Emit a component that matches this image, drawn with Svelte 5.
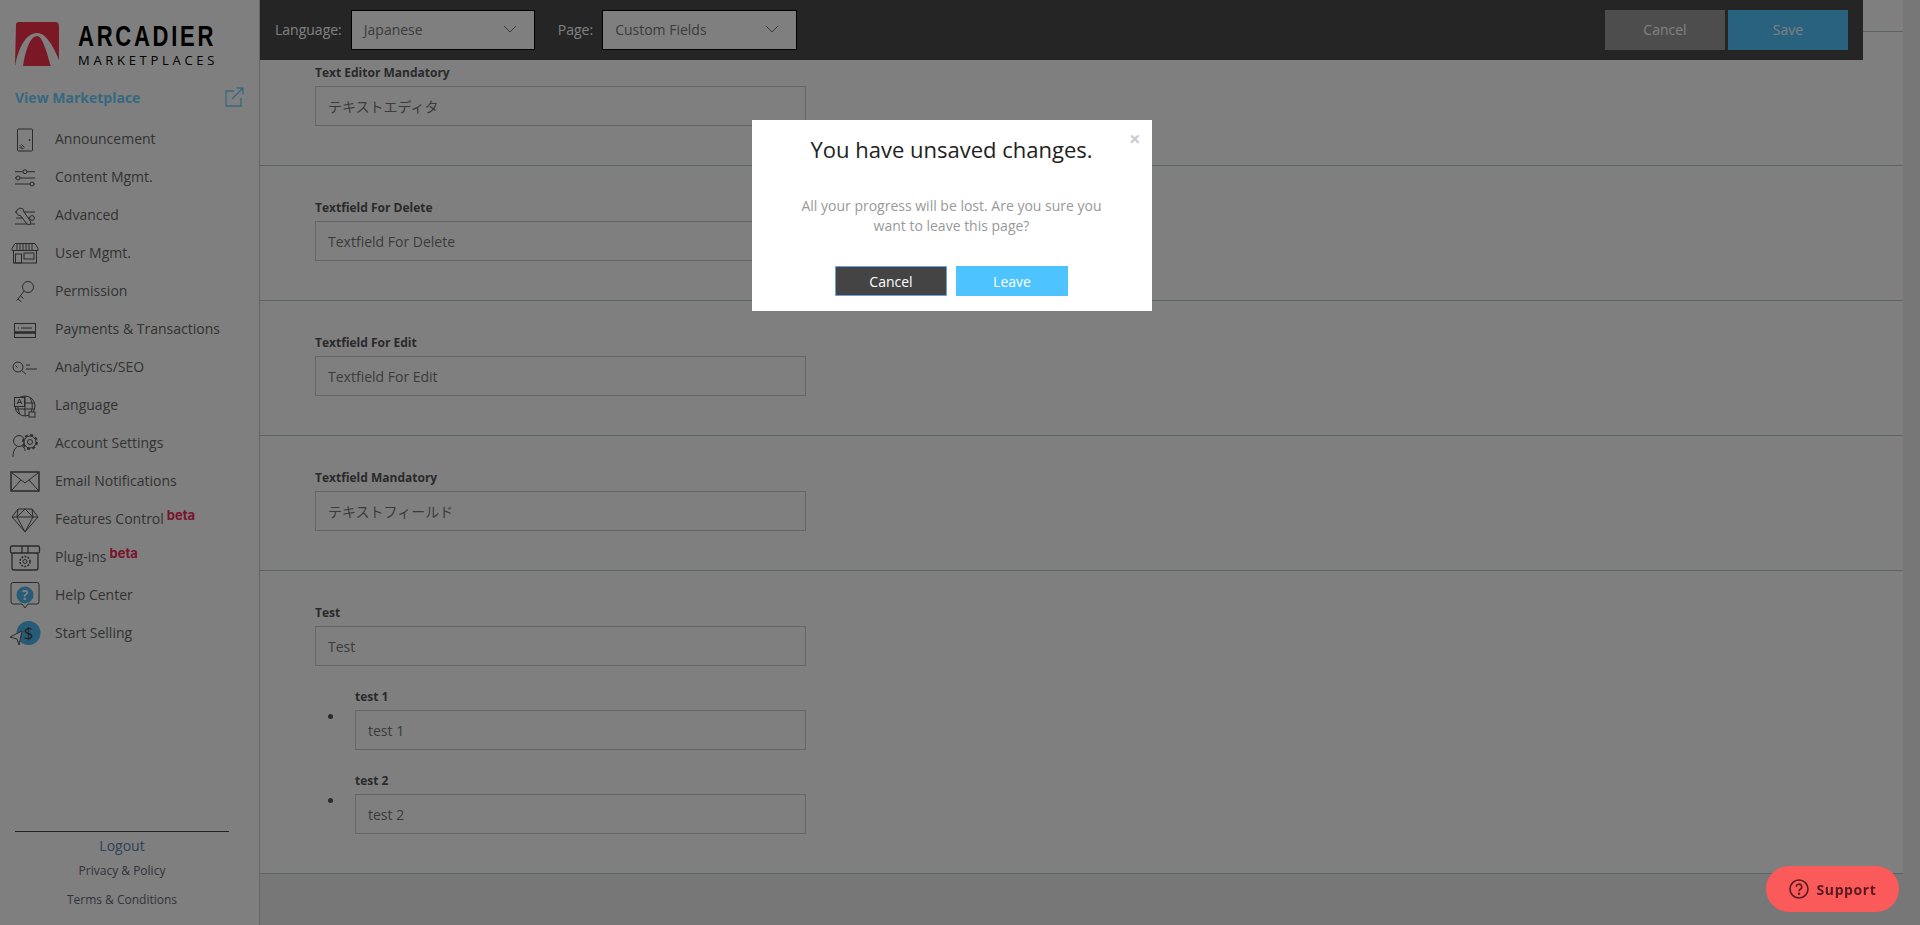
<script lang="ts">
    const icons: Record<string, string> = {
        announcement: `<rect x="8.500" y="7" width="15" height="22" rx="1"/><circle cx="20.500" cy="18" r=".6" fill="#555"/><path d="M10.500 23l4 4M10.500 25l2.500 2.500M12.500 22.500l3 3"/>`,
        content: `<path d="M6 11.700h20M6 18h20M6 24h20"/><circle cx="16" cy="11.700" r="2" fill="#fff"/><circle cx="9" cy="18" r="2" fill="#fff"/><circle cx="23" cy="24" r="2" fill="#fff"/>`,
        advanced: `<path d="M6 14h20M7 20h16M6 26h20"/><path d="M8 12l3-2 3 1 1 3 5 7 2 4-2 2-3-2-5-7-3-1-2-3z" fill="#fff"/><circle cx="23" cy="20" r="2.400" fill="#fff"/>`,
        store: `<path d="M6 7.500h20l3 5v2H3v-2z"/><path d="M8 8v6M11 8v6M14 8v6M17 8v6M20 8v6M23 8v6"/><rect x="4.500" y="14.500" width="23" height="12.500"/><rect x="6.500" y="18" width="6" height="9"/><rect x="15" y="17" width="10" height="6"/>`,
        key: `<circle cx="19" cy="13" r="5.500"/><path d="M15 17L9 25M9 25l3.500 3M11.500 22l3 2.500M9 25l-1.500 1.500"/>`,
        card: `<rect x="5.500" y="11.500" width="21" height="14"/><path d="M9 16h14" stroke-dasharray="1 2 20"/><path d="M5.500 20.500h21" stroke-width="2.500"/>`,
        analytics: `<circle cx="9" cy="17" r="5"/><path d="M12.500 20.500L17 24M17 15h4M17 19h11M6.500 15.500l2 2"/>`,
        language: `<circle cx="16" cy="18" r="10"/><path d="M6 15h20M6 21h20M16 8v20M11 10c-3 5-3 11 0 16M21 10c3 5 3 11 0 16"/><rect x="5.500" y="9.500" width="10" height="9" fill="#fff"/><path d="M8 16l2.500-5 2.500 5M9 14.500h3"/><rect x="20" y="24" width="6" height="5" fill="#fff"/>`,
        account: `<circle cx="10" cy="15" r="5.500"/><path d="M4 31c0-6 2-9 4-10M13 20c2 1 3 3 3 5"/><circle cx="21" cy="16" r="6" fill="#fff"/><circle cx="21" cy="16" r="7" stroke-width="1.800" stroke-dasharray="3 2.500"/><circle cx="21" cy="16" r="2.500"/>`,
        email: `<rect x="2" y="8" width="28" height="19" stroke-width="1.500"/><path d="M3 9l13 10L29 9M3 26l9-10M29 26l-9-10"/>`,
        features: `<path d="M9 7h14l6 8-13 15L3 15z"/><path d="M3 15h26M9 7l-1 8 8 15 8-15-1-8M8 15l8-8 8 8"/>`,
        plugins: `<rect x="1.500" y="6" width="29" height="7" rx="1.500" stroke-width="1.300"/><path d="M3 13v15a2 2 0 0 0 2 2h22a2 2 0 0 0 2-2V13M13 6v7M19 6v7" stroke-width="1.300"/><circle cx="16" cy="21.500" r="2"/><circle cx="16" cy="21.500" r="5" stroke-dasharray="2 1.200" stroke-width="1.500"/>`,
        help: `<path d="M4 4.500h24a2 2 0 0 1 2 2V24a2 2 0 0 1-2 2h-9l-3 4-3-4H4a2 2 0 0 1-2-2V6.500a2 2 0 0 1 2-2z"/><circle cx="16" cy="17" r="8.500" fill="#4db8f0" stroke="none"/><text x="16" y="22" text-anchor="middle" font-family="Open Sans" font-weight="700" font-size="14" fill="#fff" stroke="none">?</text>`,
        selling: `<circle cx="19.500" cy="17" r="12" fill="#4db8f0" stroke="none"/><text x="19.500" y="23" text-anchor="middle" font-family="Open Sans" font-size="17" fill="#444" stroke="none">$</text><path d="M1 21l12-6-3 14-2-6z" fill="#fff"/>`,
    };

    const navItems = [
        { label: "Announcement", icon: "announcement" },
        { label: "Content Mgmt.", icon: "content" },
        { label: "Advanced", icon: "advanced" },
        { label: "User Mgmt.", icon: "store" },
        { label: "Permission", icon: "key" },
        { label: "Payments & Transactions", icon: "card" },
        { label: "Analytics/SEO", icon: "analytics" },
        { label: "Language", icon: "language" },
        { label: "Account Settings", icon: "account" },
        { label: "Email Notifications", icon: "email" },
        { label: "Features Control", icon: "features", beta: true },
        { label: "Plug-ins", icon: "plugins", beta: true },
        { label: "Help Center", icon: "help" },
        { label: "Start Selling", icon: "selling" },
    ];

    const fields = [
        { label: "Text Editor Mandatory", value: "テキストエディタ" },
        { label: "Textfield For Delete", value: "Textfield For Delete" },
        { label: "Textfield For Edit", value: "Textfield For Edit" },
        { label: "Textfield Mandatory", value: "テキストフィールド" },
    ];

    const subFields = ["test 1", "test 2"];
</script>

<div class="page">
    <aside class="sidebar">
        <div class="logo">
            <svg width="44" height="45" viewBox="0 0 44 45">
                <path d="M4 0h36a4 4 0 0 1 4 4v34l-7 6H7l-7-1L1 3a3 3 0 0 1 3-3z" fill="#f5304c"/>
                <path d="M0 45C3 26 11 11 22 11c8 0 15 10 22 27v2l-8 5C31 27 27 14 22 14 15 14 10 30 8 45H0z" fill="#fff"/>
            </svg>
            <div class="logo-text">
                <span class="logo-name">ARCADIER</span>
                <span class="logo-sub">MARKETPLACES</span>
            </div>
        </div>

        <div class="view-link">
            <span>View Marketplace</span>
            <svg width="20" height="20" viewBox="0 0 20 20" fill="none" stroke="currentColor" stroke-width="1.300">
                <path d="M10 4H2v15h15v-8M8 12L19 1M12.500 1H19v6.500"/>
            </svg>
        </div>

        <nav class="nav">
            {#each navItems as item}
                <div class="nav-item">
                    <svg class="nav-icon" width="32" height="32" viewBox="0 0 32 32" fill="none" stroke="#555" stroke-width="1">
                        {@html icons[item.icon]}
                    </svg>
                    <span>{item.label}</span>
                    {#if item.beta}<span class="beta">beta</span>{/if}
                </div>
            {/each}
        </nav>

        <div class="side-footer">
            <div class="logout">Logout</div>
            <div class="small first">Privacy &amp; Policy</div>
            <div class="small">Terms &amp; Conditions</div>
        </div>
    </aside>

    <main class="main">
        <div class="top-row">
            <div class="topbar">
                <span class="bar-label">Language:</span>
                <div class="select lang">
                    <span>Japanese</span>
                    <svg width="14" height="8" viewBox="0 0 14 8" fill="none" stroke="#777" stroke-width="1"><path d="M1 1l6 6 6-6"/></svg>
                </div>
                <span class="bar-label page-label">Page:</span>
                <div class="select pg">
                    <span>Custom Fields</span>
                    <svg width="14" height="8" viewBox="0 0 14 8" fill="none" stroke="#777" stroke-width="1"><path d="M1 1l6 6 6-6"/></svg>
                </div>
                <div class="bar-actions">
                    <button class="bar-btn cancel">Cancel</button>
                    <button class="bar-btn save">Save</button>
                </div>
            </div>
            <div class="top-rule"></div>
        </div>

        <section class="section first-section">
            <div class="label">{fields[0].label}</div>
            <div class="input">{fields[0].value}</div>
        </section>
        {#each fields.slice(1) as field}
            <section class="section">
                <div class="label">{field.label}</div>
                <div class="input">{field.value}</div>
            </section>
        {/each}
        <section class="section">
            <div class="label">Test</div>
            <div class="input">Test</div>
            <ul class="sub-list">
                {#each subFields as sub}
                    <li class="sub-item">
                        <div class="label">{sub}</div>
                        <i class="bullet"></i>
                        <div class="input">{sub}</div>
                    </li>
                {/each}
            </ul>
        </section>
    </main>
</div>

<div class="overlay">
    <div class="modal">
        <span class="close">×</span>
        <h2>You have unsaved changes.</h2>
        <p>All your progress will be lost. Are you sure you want to leave this page?</p>
        <div class="modal-actions">
            <button class="modal-btn dark">Cancel</button>
            <button class="modal-btn light">Leave</button>
        </div>
    </div>
</div>

<div class="support">
    <svg width="20" height="20" viewBox="0 0 20 20" fill="none" stroke="#5c1a1f" stroke-width="1.600">
        <circle cx="10" cy="10" r="9"/>
        <path d="M7.300 7.800a2.700 2.700 0 1 1 4 2.400c-.9.500-1.300 1-1.300 2"/>
        <circle cx="10" cy="14.800" r=".5" fill="#5c1a1f"/>
    </svg>
    <span>Support</span>
</div>

<style>
    :global(body) {
        margin: 0;
        background: #eeeeee;
        font-family: "Open Sans", sans-serif;
        overflow: hidden;
    }

    .page {
        display: flex;
        height: 925px;
        overflow: hidden;
    }

    .sidebar {
        width: 260px;
        flex: none;
        box-sizing: border-box;
        background: #fff;
        border-right: 1px solid #ccc;
        display: flex;
        flex-direction: column;
    }

    .logo {
        display: flex;
        gap: 19px;
        padding: 22px 0 0 15px;
    }

    .logo-text {
        display: flex;
        flex-direction: column;
        color: #000;
        width: 140px;
        white-space: nowrap;
    }

    .logo-name {
        font-family: "Liberation Sans", sans-serif;
        font-size: 29px;
        line-height: 28px;
        letter-spacing: 3.6px;
        font-weight: 700;
        transform: scaleX(0.76);
        transform-origin: left center;
    }

    .logo-sub {
        font-family: "Open Sans", sans-serif;
        font-size: 13px;
        line-height: 18px;
        letter-spacing: 3.7px;
        margin-top: 1px;
    }

    .view-link {
        display: flex;
        align-items: center;
        justify-content: space-between;
        margin: 18px 15px 0 15px;
        color: #6cd0ff;
        font-size: 14px;
        font-weight: 700;
        height: 20px;
    }

    .nav {
        margin-top: 12px;
    }

    .nav-item {
        display: flex;
        align-items: center;
        height: 38px;
        color: #666;
        font-size: 14px;
    }

    .nav-icon {
        margin: 0 14px 0 9px;
        flex: none;
    }

    .beta {
        font-family: Inter, sans-serif;
        font-size: 13px;
        font-weight: 700;
        color: #f02a5a;
        margin: -6px 0 0 3px;
    }

    .side-footer {
        margin: auto 30px 0 15px;
        border-top: 1px solid #444;
        text-align: center;
        color: #667;
        padding-bottom: 16px;
    }

    .logout {
        font-size: 14px;
        line-height: 20px;
        margin-top: 4px;
        color: #5a85b0;
    }

    .small {
        font-size: 12px;
        line-height: 18px;
        margin-top: 11px;
    }

    .small.first {
        margin-top: 6px;
    }

    .main {
        width: 1643px;
        flex: none;
        background: #fff;
        height: 874px;
    }

    .top-row {
        display: flex;
        align-items: flex-start;
    }

    .topbar {
        width: 1603px;
        height: 60px;
        box-sizing: border-box;
        background: #4a4a4a;
        display: flex;
        align-items: center;
        padding: 0 15px;
        flex: none;
    }

    .top-rule {
        flex: 1;
        margin-top: 31px;
        border-top: 1px solid #b5c8c5;
    }

    .bar-label {
        color: #fff;
        font-size: 14px;
        padding-bottom: 2px;
    }

    .page-label {
        margin-left: 23px;
    }

    .select {
        height: 40px;
        box-sizing: border-box;
        border: 1px solid #000;
        background: #fff;
        color: #777;
        font-size: 14px;
        display: flex;
        align-items: center;
        justify-content: space-between;
        padding: 0 17px 2px 12px;
        margin-left: 9px;
    }

    .lang {
        width: 184px;
    }

    .pg {
        width: 195px;
    }

    .bar-actions {
        margin-left: auto;
        display: flex;
        gap: 3px;
    }

    .bar-btn {
        width: 120px;
        height: 40px;
        border: 0;
        color: #fff;
        font: 14px "Open Sans", sans-serif;
        padding: 0 0 2px;
    }

    .bar-btn.cancel {
        background: #9a9a9a;
    }

    .bar-btn.save {
        background: #50c5ff;
    }

    .section {
        padding: 0 0 39px 55px;
        border-bottom: 1px solid #b5c8c5;
        box-sizing: border-box;
        margin-top: 31px;
    }

    .first-section {
        margin-top: 0;
        padding-top: 2px;
    }

    .label {
        font-size: 12px;
        font-weight: 700;
        line-height: 21px;
        margin-bottom: 3px;
        color: #555;
    }

    .input {
        width: 491px;
        height: 40px;
        box-sizing: border-box;
        border: 1px solid #ccc;
        padding: 0 12px;
        display: flex;
        align-items: center;
        font-size: 14px;
        font-family: "Open Sans", "Noto Sans CJK JP", sans-serif;
        color: #777;
    }

    .sub-list {
        list-style: none;
        margin: 20px 0 0;
        padding: 0;
    }

    .sub-item {
        display: grid;
        grid-template-columns: 40px 451px;
        margin-bottom: 20px;
    }

    .sub-item:last-child {
        margin-bottom: 0;
    }

    .sub-item .label {
        grid-column: 2;
    }

    .sub-item .input {
        width: 451px;
    }

    .bullet {
        width: 5px;
        height: 5px;
        border-radius: 50%;
        background: #555;
        margin: 4px 0 0 13px;
    }

    .overlay {
        position: fixed;
        inset: 0 17px 0 0;
        box-shadow: 17px 0 0 rgba(0, 0, 0, 0.5);
        background: rgba(0, 0, 0, 0.5);
        display: flex;
        justify-content: center;
        align-items: flex-start;
    }

    .modal {
        position: relative;
        width: 400px;
        height: 191px;
        margin-top: 120px;
        background: #fff;
        text-align: center;
    }

    .close {
        position: absolute;
        top: 5px;
        right: 11px;
        color: #ccc;
        font-size: 20px;
        font-weight: 700;
        line-height: 27px;
    }

    h2 {
        margin: 12px 0 0;
        font-size: 22px;
        font-weight: 400;
        line-height: 34px;
        color: #222;
    }

    p {
        margin: 30px 40px 0;
        font-size: 14px;
        line-height: 20px;
        color: #999;
    }

    .modal-actions {
        margin-top: 30px;
        display: flex;
        justify-content: center;
        gap: 9px;
    }

    .modal-btn {
        width: 112px;
        height: 30px;
        border: 0;
        color: #fff;
        font: 14px "Open Sans", sans-serif;
        padding: 0;
    }

    .modal-btn.dark {
        background: #444;
        box-shadow: inset 0 0 0 1px #6b9fdf;
        border-radius: 2px;
    }

    .modal-btn.light {
        background: #4dc4ff;
    }

    .support {
        position: fixed;
        left: 1766px;
        top: 866px;
        width: 133px;
        height: 46px;
        border-radius: 23px;
        background: #fa5a5a;
        color: #5c1a1f;
        display: flex;
        align-items: center;
        justify-content: center;
        gap: 8px;
        font-size: 14px;
        font-weight: 700;
        letter-spacing: 0.6px;
    }
</style>
